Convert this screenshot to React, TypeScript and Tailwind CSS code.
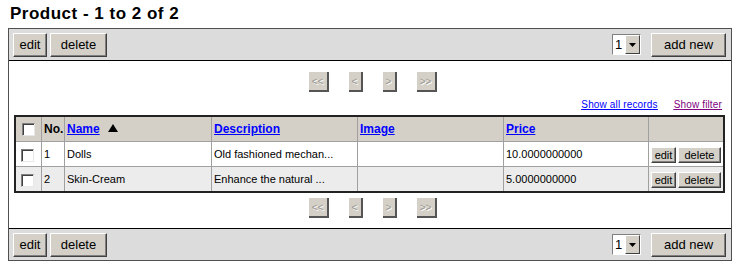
import React from 'react';

const rows = [
  { no: 1, name: 'Dolls', desc: 'Old fashioned mechan...', image: '', price: '10.0000000000', bg: 'bg-white' },
  { no: 2, name: 'Skin-Cream', desc: 'Enhance the natural ...', image: '', price: '5.0000000000', bg: 'bg-[#ececec]' },
];

const cols = 'grid grid-cols-[25px_23px_147px_146px_146px_145px_75px]';

function Btn({ label, w, small }: { label: string; w: string; small?: boolean }) {
  return (
    <button
      className={`${w} bg-[#d4d0c8] text-black border border-t-white border-l-white border-r-[#404040] border-b-[#404040] shadow-[inset_-1px_-1px_0_#808080] leading-none ${
        small ? 'h-[16px] text-[11px]' : 'h-[24px] text-[13px]'
      }`}
    >
      {label}
    </button>
  );
}

function Checkbox() {
  return (
    <span className="inline-block w-[13px] h-[13px] bg-white border border-t-[#808080] border-l-[#808080] border-r-[#e8e8e8] border-b-[#e8e8e8] shadow-[inset_1px_1px_0_#404040]" />
  );
}

function PageBtn({ label, w }: { label: string; w: string }) {
  return (
    <span
      className={`${w} h-[20px] flex items-center justify-center bg-[#d4d0c8] border-r-2 border-b-2 border-r-[#555] border-b-[#555] text-[10px] text-[#9a968e] [text-shadow:1px_1px_0_#fff]`}
    >
      {label}
    </span>
  );
}

function Pager() {
  return (
    <div className="flex justify-center gap-[20px] h-[20px]">
      <PageBtn label="<<" w="w-[20px]" />
      <PageBtn label="<" w="w-[14px]" />
      <PageBtn label=">" w="w-[14px]" />
      <PageBtn label=">>" w="w-[20px]" />
    </div>
  );
}

function Toolbar({ top }: { top?: boolean }) {
  return (
    <div
      className={`h-[32px] bg-[#dcdcdc] flex items-center justify-between pl-[4px] pr-[5px] ${
        top ? 'border-b border-black' : 'border-t border-black'
      }`}
    >
      <div className="flex gap-[3px]">
        <Btn label="edit" w="w-[34px]" />
        <Btn label="delete" w="w-[57px]" />
      </div>
      <div className="flex items-center gap-[10px]">
        <div className="flex h-[21px] bg-white border border-t-[#808080] border-l-[#808080] border-r-white border-b-white">
          <span className="w-[12px] text-[13px] leading-[19px] pl-[2px]">1</span>
          <span className="w-[15px] h-[19px] bg-[#d4d0c8] border border-t-white border-l-white border-r-[#404040] border-b-[#404040] flex items-center justify-center">
            <svg width="7" height="4" viewBox="0 0 7 4">
              <path d="M0 0h7L3.5 4z" fill="#000" />
            </svg>
          </span>
        </div>
        <button className="w-[75px] h-[24px] bg-[#d4d0c8] text-[13px] leading-none border border-t-white border-l-white border-r-[#404040] border-b-[#404040] shadow-[inset_-1px_-1px_0_#808080]">
          add new
        </button>
      </div>
    </div>
  );
}

export default function App() {
  return (
    <div className="w-[738px] h-[266px] bg-white font-['Liberation_Sans',Arial,sans-serif] text-black">
      <div className="h-[28px] pl-[10px] pt-[4px] text-[17px] tracking-[0.5px] font-bold leading-[20px]">
        Product - 1 to 2 of 2
      </div>

      <div className="ml-[8px] w-[724px] border border-[#505050]">
        <Toolbar top />

        {/* Content */}
        <div className="bg-white pt-[11px] pb-[10px] pl-[5px]">
          <Pager />

          <div className="mt-[5px] h-[14px] flex justify-end items-center gap-[16px] pr-[9px] text-[10px] tracking-[0.15px] underline">
            <a className="text-[#0000ff]">Show all records</a>
            <a className="text-[#800080]">Show filter</a>
          </div>

          {/* Table */}
          <div className="mt-[4px] w-[711px] border-2 border-[#222] text-[11px]">
            <div className={`${cols} h-[24px] bg-[#d4d0c8] text-[12px] font-bold`}>
              <div className="flex items-center pl-[6px] pt-[1px]">
                <Checkbox />
              </div>
              <div className="border-l border-[#a0a0a0] pl-[2px] pt-[3px]">No.</div>
              <div className="border-l border-[#a0a0a0] pl-[2px] pt-[3px] flex gap-[8px]">
                <a className="text-[#0000ff] underline">Name</a>
                <svg width="10" height="8" viewBox="0 0 10 8" className="mt-[4px]">
                  <path d="M5 0L10 8H0z" fill="#000" />
                </svg>
              </div>
              <div className="border-l border-[#a0a0a0] pl-[2px] pt-[3px]">
                <a className="text-[#0000ff] underline">Description</a>
              </div>
              <div className="border-l border-[#a0a0a0] pl-[2px] pt-[3px]">
                <a className="text-[#0000ff] underline">Image</a>
              </div>
              <div className="border-l border-[#a0a0a0] pl-[2px] pt-[3px]">
                <a className="text-[#0000ff] underline">Price</a>
              </div>
              <div className="border-l border-[#a0a0a0]" />
            </div>

            {rows.map((r) => (
              <div key={r.no} className={`${cols} h-[25px] border-t border-[#a0a0a0] ${r.bg}`}>
                <div className="flex items-center pl-[5px] pt-[2px]">
                  <Checkbox />
                </div>
                <div className="border-l border-[#a0a0a0] pl-[2px] pt-[4px]">{r.no}</div>
                <div className="border-l border-[#a0a0a0] pl-[2px] pt-[4px]">{r.name}</div>
                <div className="border-l border-[#a0a0a0] pl-[2px] pt-[4px]">{r.desc}</div>
                <div className="border-l border-[#a0a0a0] pl-[2px] pt-[4px]">{r.image}</div>
                <div className="border-l border-[#a0a0a0] pl-[2px] pt-[4px]">{r.price}</div>
                <div className="border-l border-[#a0a0a0] flex items-center justify-center gap-[2px] pt-[2px]">
                  <Btn label="edit" w="w-[25px]" small />
                  <Btn label="delete" w="w-[43px]" small />
                </div>
              </div>
            ))}
          </div>

          <div className="mt-[5px]">
            <Pager />
          </div>
        </div>

        <Toolbar />
      </div>
    </div>
  );
}
